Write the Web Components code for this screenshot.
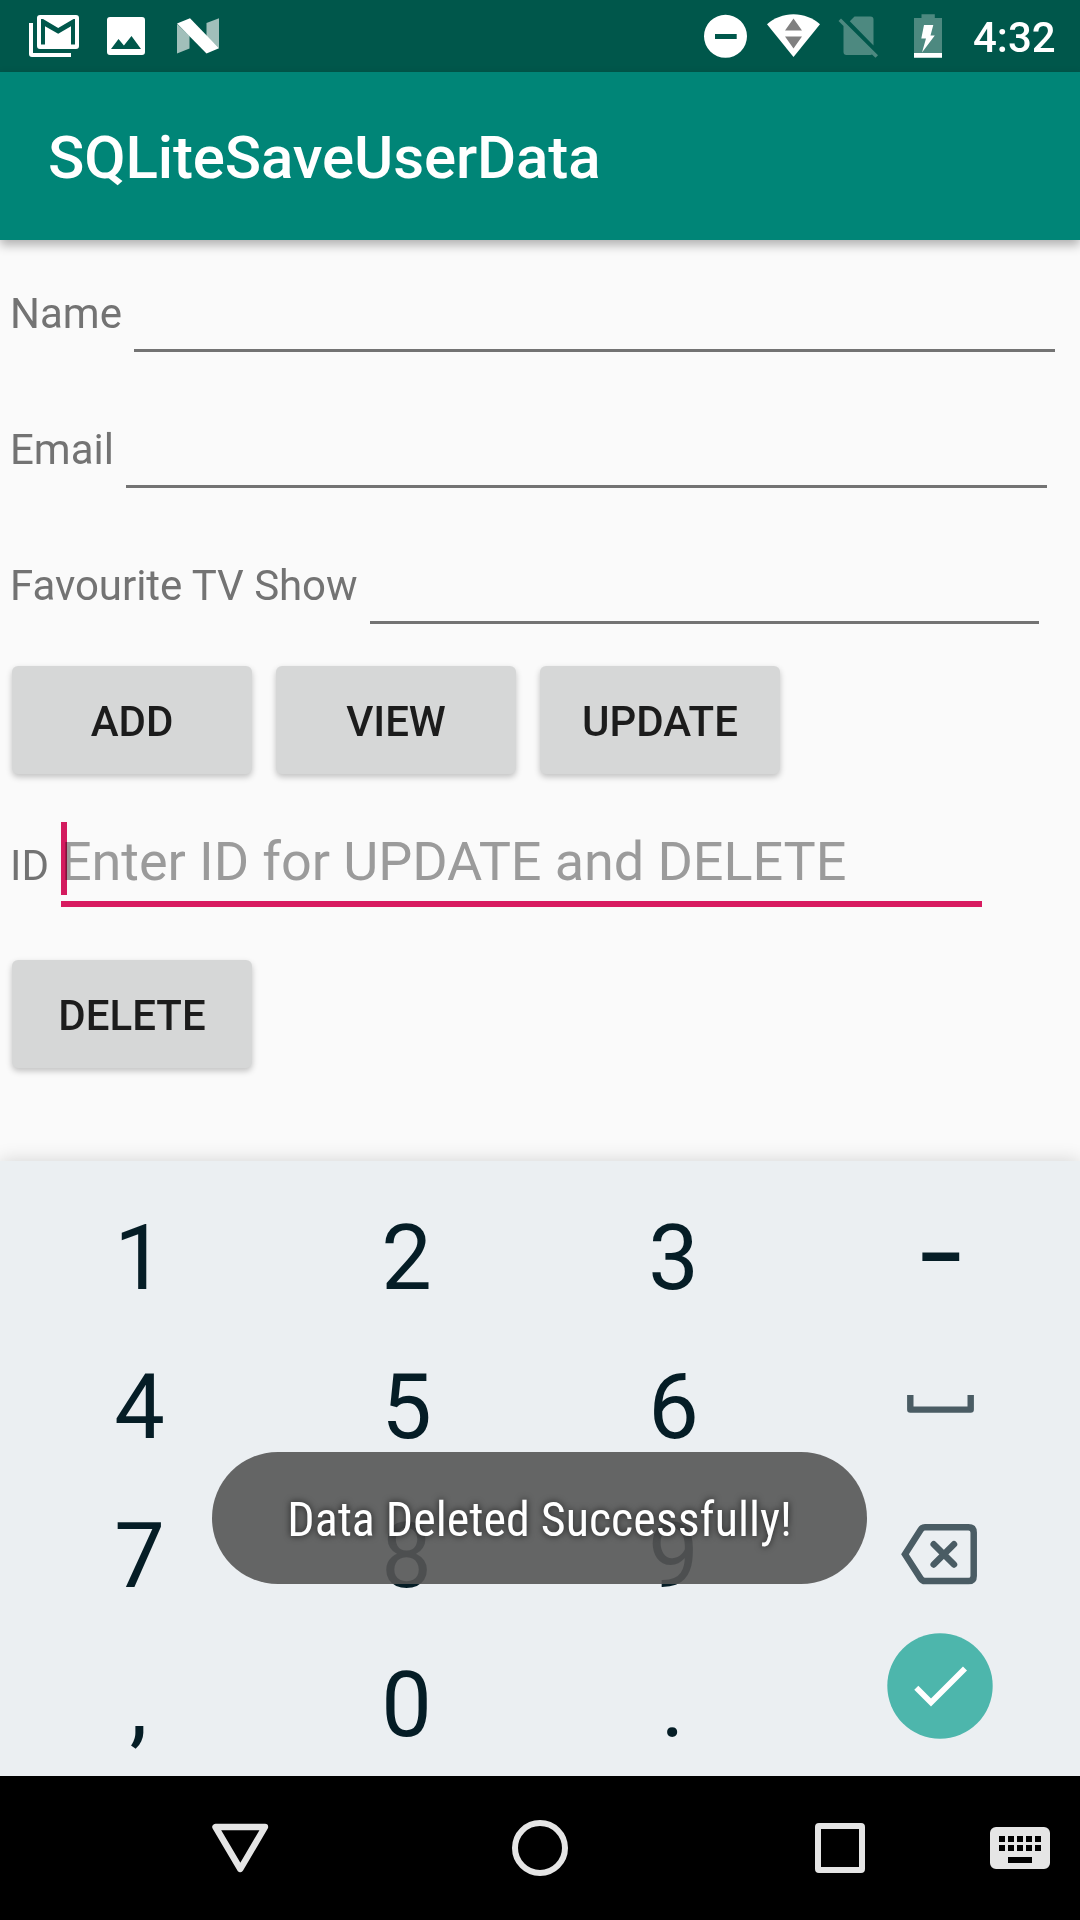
<!DOCTYPE html>
<html lang="en">
<head>
<meta charset="utf-8">
<title>SQLiteSaveUserData</title>
<style>
body{margin:0;width:1080px;height:1920px;overflow:hidden;background:#fafafa;font-family:Roboto,"Noto Sans",sans-serif}
</style>
</head>
<body>
<phone-screen>
  <status-bar>4:32</status-bar>
  <app-bar>SQLiteSaveUserData</app-bar>
  <form-panel>
    <text-field style="--start:134px;--line:921px">Name</text-field>
    <text-field style="--start:126px;--line:921px">Email</text-field>
    <text-field style="--start:370px;--line:669px;letter-spacing:-.05px">Favourite TV Show</text-field>
    <button-row><raised-button>ADD</raised-button><raised-button>VIEW</raised-button><raised-button>UPDATE</raised-button></button-row>
    <text-field active hint="Enter ID for UPDATE and DELETE" style="--start:61px;--line:921px">ID</text-field>
    <button-row><raised-button>DELETE</raised-button></button-row>
  </form-panel>
  <number-pad></number-pad>
  <nav-bar></nav-bar>
  <toast-message>Data Deleted Successfully!</toast-message>
</phone-screen>
<script>
const define = (name, html) => customElements.define(name, class extends HTMLElement {
  constructor(){
    super();
    const root = this.attachShadow({mode:'open'});
    root.innerHTML = typeof html === 'function' ? html(this) : html;
  }
});

define('phone-screen', `<style>
:host{display:flex;flex-direction:column;position:relative;width:1080px;height:1920px}
</style><slot></slot>`);

define('status-bar', `<style>
:host{display:flex;height:72px;background:#00574b;color:#fff;justify-content:space-between;flex:none}
.right{display:flex}
svg{display:block}
span{font-size:42px;font-weight:500;line-height:49px;padding-top:13px;width:107px}
</style>
<svg width="240" height="72" viewBox="0 0 240 72" fill="#fff">
<path d="M29 23h4v30h38v4H32a3 3 0 0 1-3-3z"/>
<path fill-rule="evenodd" d="M40 15h36a3 3 0 0 1 3 3v28a3 3 0 0 1-3 3H40a3 3 0 0 1-3-3V18a3 3 0 0 1 3-3zM41 19v25.500h4V26.200l13.200 7.600L71 26.200v18.300h4V19h-1.500L58.200 28 43 19z"/>
<path fill-rule="evenodd" d="M110 17h32a3 3 0 0 1 3 3v32a3 3 0 0 1-3 3h-32a3 3 0 0 1-3-3V20a3 3 0 0 1 3-3zM111 49h30l-9.500-13-7.600 9.500-5.400-6.500z"/>
<path fill="#a1bfba" d="M177 24l12.500 12v12.500L177 53.500zM206.500 23l12.500-4.700v30l-12.500-12z"/>
<path d="M177 23.500l13-5.200 29 30-12.500 5.200z"/>
</svg>
<div class="right">
<svg width="273" height="72" viewBox="700 0 273 72" fill="#fff">
<path fill-rule="evenodd" d="M725.500 14.800a21.500 21.500 0 1 1 0 43 21.500 21.500 0 0 1 0-43zM715 34v5h21.700v-5z"/>
<path d="M767 24.200C774 18 783.500 14.200 793.500 14.200S813 18 820 24.200L793.500 57z"/>
<path fill="#808080" d="M793.500 18.500l8.500 12h-17zM785 36.500h17l-8.500 12z"/>
<g fill="#4d8980"><path d="M849.800 21.200l4.700-4.700H870.500a3 3 0 0 1 3 3V45.500z"/>
<path d="M838.500 21l2.500-2.500L878 55.300l-2.500 2.500-3.500-3.200-1.500.4h-24a3 3 0 0 1-3-3V26z"/>
<path d="M921.500 14.300h13.300V18H942v35h-28V18h7.500z"/></g>
<path d="M914 53h28v4.800h-28zM924 25h9.300l-2.800 10.500h4.300L922 52.600l4-14h-4.700z"/>
</svg><span><slot></slot></span></div>`);

define('app-bar', `<style>
:host{display:flex;align-items:center;box-sizing:border-box;height:168px;padding:3px 48px 0;background:#008577;color:#fff;
font-size:60px;font-weight:500;line-height:70px;letter-spacing:-.12px;box-shadow:0 5px 10px rgba(0,0,0,.3);z-index:1;flex:none}
</style><slot></slot>`);

define('form-panel', `<style>
:host{display:flex;flex-direction:column;height:921px;flex:none}
</style><slot></slot>`);

define('text-field', el => `<style>
:host{display:flex;height:136px;flex:none}
:host([active]){height:150px}
label{box-sizing:border-box;width:var(--start);padding:49px 0 0 10px;font-size:42px;line-height:49px;color:#737373;white-space:nowrap}
.field{box-sizing:border-box;width:var(--line);height:112px;border-bottom:3px solid #737373}
:host([active]) .field{height:115px;border-bottom:6px solid #d81b60;position:relative}
.hint{padding-top:38px;font-size:54px;line-height:63px;letter-spacing:-.08px;color:#9b9b9b;white-space:nowrap}
.caret{position:absolute;left:0;top:30px;width:6px;height:73px;background:#d81b60;mix-blend-mode:multiply}
</style><label><slot></slot></label><div class="field">${el.hasAttribute('active') ? `<div class="hint">${el.getAttribute('hint')}</div><i class="caret"></i>` : ''}</div>`);

define('button-row', `<style>
:host{display:flex;box-sizing:border-box;height:144px;padding:18px 12px;gap:24px;flex:none}
</style><slot></slot>`);

define('raised-button', `<style>
:host{display:flex;align-items:center;justify-content:center;box-sizing:border-box;width:240px;height:108px;padding-top:3px;border-radius:6px;
background:#d6d7d7;color:#1c1c1c;font-size:42px;font-weight:500;line-height:49px;box-shadow:0 3px 6px rgba(0,0,0,.23)}
</style><slot></slot>`);

define('number-pad', `<style>
:host{display:grid;box-sizing:border-box;height:615px;padding:27px 6px 0;grid-template-columns:repeat(4,267px);grid-template-rows:149px 149px 149px 141px;
background:#ebeff2;color:#051d26;font-size:90px;line-height:141px;text-align:center;box-shadow:0 0 18px rgba(0,0,0,.16);flex:none}
svg{display:block;overflow:visible}
.dash{font-weight:500;transform:scaleX(.82)}
.mark{padding-right:2px}
</style>
<span>1</span><span>2</span><span>3</span><span class="dash">–</span>
<span>4</span><span>5</span><span>6</span>
<svg width="267" height="141" viewBox="807 1337 267 141"><path d="M910.300 1398.300v11.300h60.400v-11.300" fill="none" stroke="#4a5c64" stroke-width="6.400" stroke-linecap="square" stroke-linejoin="round"/></svg>
<span>7</span><span>8</span><span>9</span>
<svg width="267" height="141" viewBox="807 1486 267 141" fill="none" stroke="#4a5c64" stroke-width="6.500"><path d="M905 1554.300l15.500-24.300q1.800-2.700 4.500-2.700h43.500q5.200 0 5.200 5.200v43.400q0 5.200-5.200 5.200H925q-2.700 0-4.500-2.700z"/><path d="M933.700 1544.200l20.300 20.300M954 1544.200l-20.300 20.300" stroke-linecap="round"/></svg>
<span class="mark">,</span><span>0</span><span class="mark">.</span>
<svg width="267" height="141" viewBox="807 1635 267 141"><circle cx="940" cy="1686" r="52.700" fill="#4db6ac"/><path d="M916.300 1687.700l14.700 14.700 34-34" fill="none" stroke="#fff" stroke-width="5.700"/></svg>`);

define('nav-bar', `<style>
:host{display:flex;height:144px;background:#000;flex:none;z-index:1}
svg{display:block}
</style>
<svg width="1080" height="144" viewBox="0 1776 1080 144" fill="none" stroke="#e5e5e5" stroke-width="6">
<path d="M215.500 1827h49.500l-24.700 42z" stroke-width="6.400" stroke-linejoin="round"/>
<circle cx="540" cy="1848" r="25"/>
<path fill="#e5e5e5" stroke="none" fill-rule="evenodd" d="M819 1823h42a4 4 0 0 1 4 4v42a4 4 0 0 1-4 4h-42a4 4 0 0 1-4-4v-42a4 4 0 0 1 4-4zM821 1829v38h38v-38z"/>
<path fill="#e5e5e5" stroke="none" fill-rule="evenodd" d="M996 1827h48a6 6 0 0 1 6 6v30a6 6 0 0 1-6 6h-48a6 6 0 0 1-6-6v-30a6 6 0 0 1 6-6zM999 1836v6h6v-6zM1008 1836v6h6v-6zM1017 1836v6h6v-6zM1026 1836v6h6v-6zM1035 1836v6h6v-6zM999 1845v6h6v-6zM1008 1845v6h6v-6zM1017 1845v6h6v-6zM1026 1845v6h6v-6zM1035 1845v6h6v-6zM1008 1857v6h24v-6z"/>
</svg>`);

define('toast-message', `<style>
:host{position:absolute;left:212px;top:1452px;z-index:2;display:flex;align-items:center;justify-content:center;box-sizing:border-box;width:655px;height:132px;padding-top:3px;
border-radius:66px;background:rgba(85,85,85,.9);color:#fff;font-family:"Roboto Condensed",Roboto,sans-serif;font-stretch:75%;font-size:48px;line-height:56px;
white-space:nowrap;text-shadow:0 0 7px rgba(0,0,0,.73)}
</style><slot></slot>`);
</script>
</body>
</html>
